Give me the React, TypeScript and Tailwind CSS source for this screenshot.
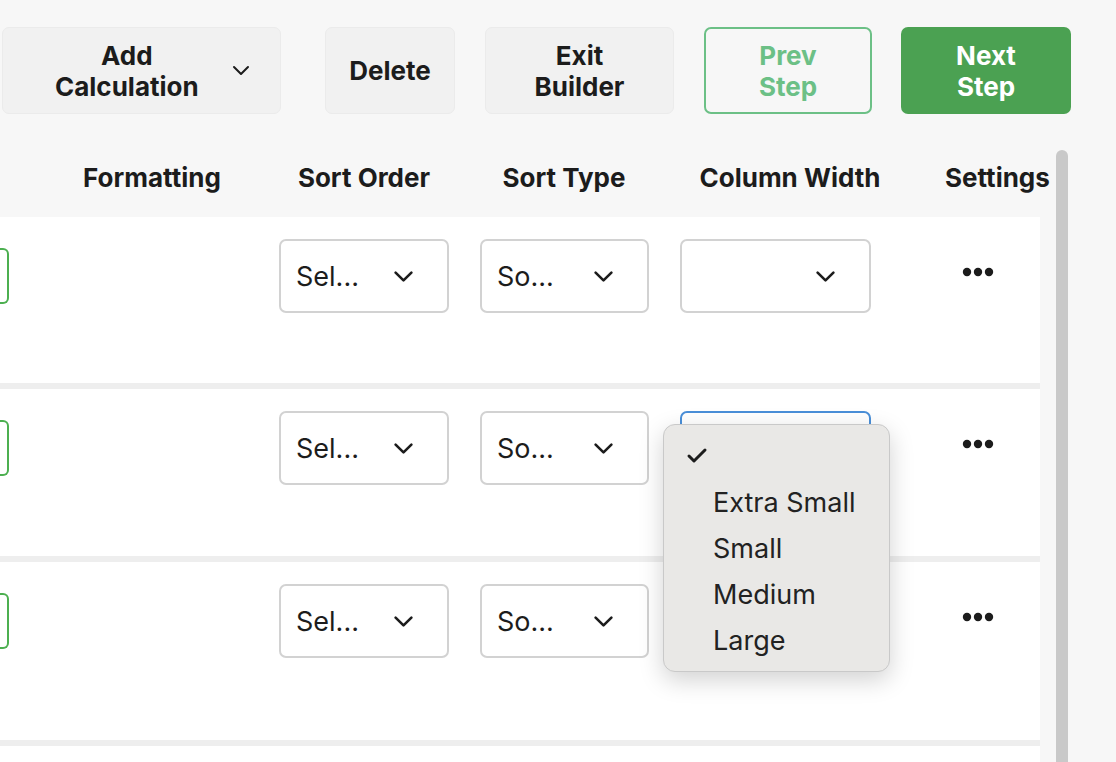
import { Check } from 'lucide-react';

interface RowProps {
  height: string;
  focused?: boolean;
}

function Chevron({ w, h, stroke }: { w: number; h: number; stroke: number }) {
  return (
    <svg width={w} height={h} viewBox={`0 0 ${w} ${h}`} fill="none">
      <polyline
        points={`${stroke},${stroke} ${w / 2},${h - stroke} ${w - stroke},${stroke}`}
        stroke="#1c1c1c"
        strokeWidth={stroke}
        strokeLinecap="round"
        strokeLinejoin="round"
      />
    </svg>
  );
}

function Select({ label, width, focused }: { label?: string; width: string; focused?: boolean }) {
  return (
    <div
      className={`${width} h-[74px] rounded-[7px] bg-white flex items-center justify-between pl-[15px] pr-[33px] ${
        focused ? 'border-2 border-[#4a8fd8]' : 'border-2 border-[#d2d2d2]'
      }`}
    >
      <span className="text-[27px] text-[#1c1c1c] leading-none">{label}</span>
      <Chevron w={21} h={13} stroke={2.6} />
    </div>
  );
}

function Dots() {
  return (
    <svg width="32" height="10" viewBox="0 0 32 10">
      <circle cx="5" cy="5" r="4.2" fill="#1c1c1c" />
      <circle cx="16" cy="5" r="4.2" fill="#1c1c1c" />
      <circle cx="27" cy="5" r="4.2" fill="#1c1c1c" />
    </svg>
  );
}

function Row({ height, focused }: RowProps) {
  return (
    <div className={`flex items-start bg-white ${height} border-b-[6px] border-[#eeeeee]`}>
      <div className="w-[40px] pt-[31px]">
        <div className="w-[9px] h-[56px] border-2 border-l-0 border-[#4caf50] rounded-r-[6px]" />
      </div>
      <div className="w-[224px]" />
      <div className="w-[200px] pl-[15px] pt-[22px]">
        <Select label="Sel..." width="w-[170px]" />
      </div>
      <div className="w-[200px] pl-[16px] pt-[22px]">
        <Select label="So..." width="w-[169px]" />
      </div>
      <div className="w-[252px] pl-[16px] pt-[22px]">
        <Select width="w-[191px]" focused={focused} />
      </div>
      <div className="w-[124px] pl-[46px] pt-[50px]">
        <Dots />
      </div>
    </div>
  );
}

const sizes = ['Extra Small', 'Small', 'Medium', 'Large'];

export default function App() {
  return (
    <div className="relative w-[1116px] h-[762px] overflow-hidden bg-[#f7f7f7] font-['Inter',sans-serif] text-[#1c1c1c]">
      {/* toolbar */}
      <div className="flex items-start h-[150px] pt-[27px] pl-[2px] text-[26px] font-bold leading-[31px]">
        <button className="w-[279px] h-[87px] rounded-[7px] bg-[#f1f1f1] border border-[#ebebeb] flex items-center justify-between pl-[52px] pr-[30px]">
          <span className="text-center">
            Add
            <br />
            Calculation
          </span>
          <Chevron w={18} h={11} stroke={2} />
        </button>
        <button className="ml-[44px] w-[130px] h-[87px] rounded-[7px] bg-[#f1f1f1] border border-[#ebebeb]">
          Delete
        </button>
        <button className="ml-[30px] w-[189px] h-[87px] rounded-[7px] bg-[#f1f1f1] border border-[#ebebeb]">
          Exit
          <br />
          Builder
        </button>
        <button className="ml-[30px] w-[168px] h-[87px] rounded-[7px] border-2 border-[#6cc086] text-[#6cc086]">
          Prev
          <br />
          Step
        </button>
        <button className="ml-[29px] w-[170px] h-[87px] rounded-[7px] bg-[#4ba152] text-white">
          Next
          <br />
          Step
        </button>
      </div>

      {/* table + scrollbar */}
      <div className="flex h-[612px]">
        <div className="w-[1040px]">
          <div className="flex items-start h-[67px] pt-[12px] text-[26px] leading-[31px] font-bold whitespace-nowrap">
            <div className="w-[40px]" />
            <div className="w-[224px] text-center">Formatting</div>
            <div className="w-[200px] text-center">Sort Order</div>
            <div className="w-[200px] text-center">Sort Type</div>
            <div className="w-[252px] text-center">Column Width</div>
            <div className="w-[124px] pl-[29px]">Settings</div>
          </div>
          <Row height="h-[172px]" />
          <Row height="h-[173px]" focused />
          <Row height="h-[184px]" />
          <div className="h-[40px] bg-white" />
        </div>
        <div className="flex-1 pl-[16px]">
          <div className="w-[12px] h-[700px] rounded-t-full bg-[#c9c9c9]" />
        </div>
      </div>

      {/* open dropdown */}
      <div className="absolute left-[663px] top-[424px] w-[227px] h-[248px] rounded-[12px] bg-[#e9e8e6] border border-[#c9c9c9] shadow-[0_8px_24px_rgba(0,0,0,0.18)] pt-[8px] text-[27px] text-[#222222]">
        <div className="h-[46px] flex items-center pl-[21px]">
          <Check size={24} strokeWidth={3} className="text-[#1c1c1c]" />
        </div>
        {sizes.map((s) => (
          <div key={s} className="h-[46px] flex items-center pl-[49px] leading-none">
            {s}
          </div>
        ))}
      </div>
    </div>
  );
}
